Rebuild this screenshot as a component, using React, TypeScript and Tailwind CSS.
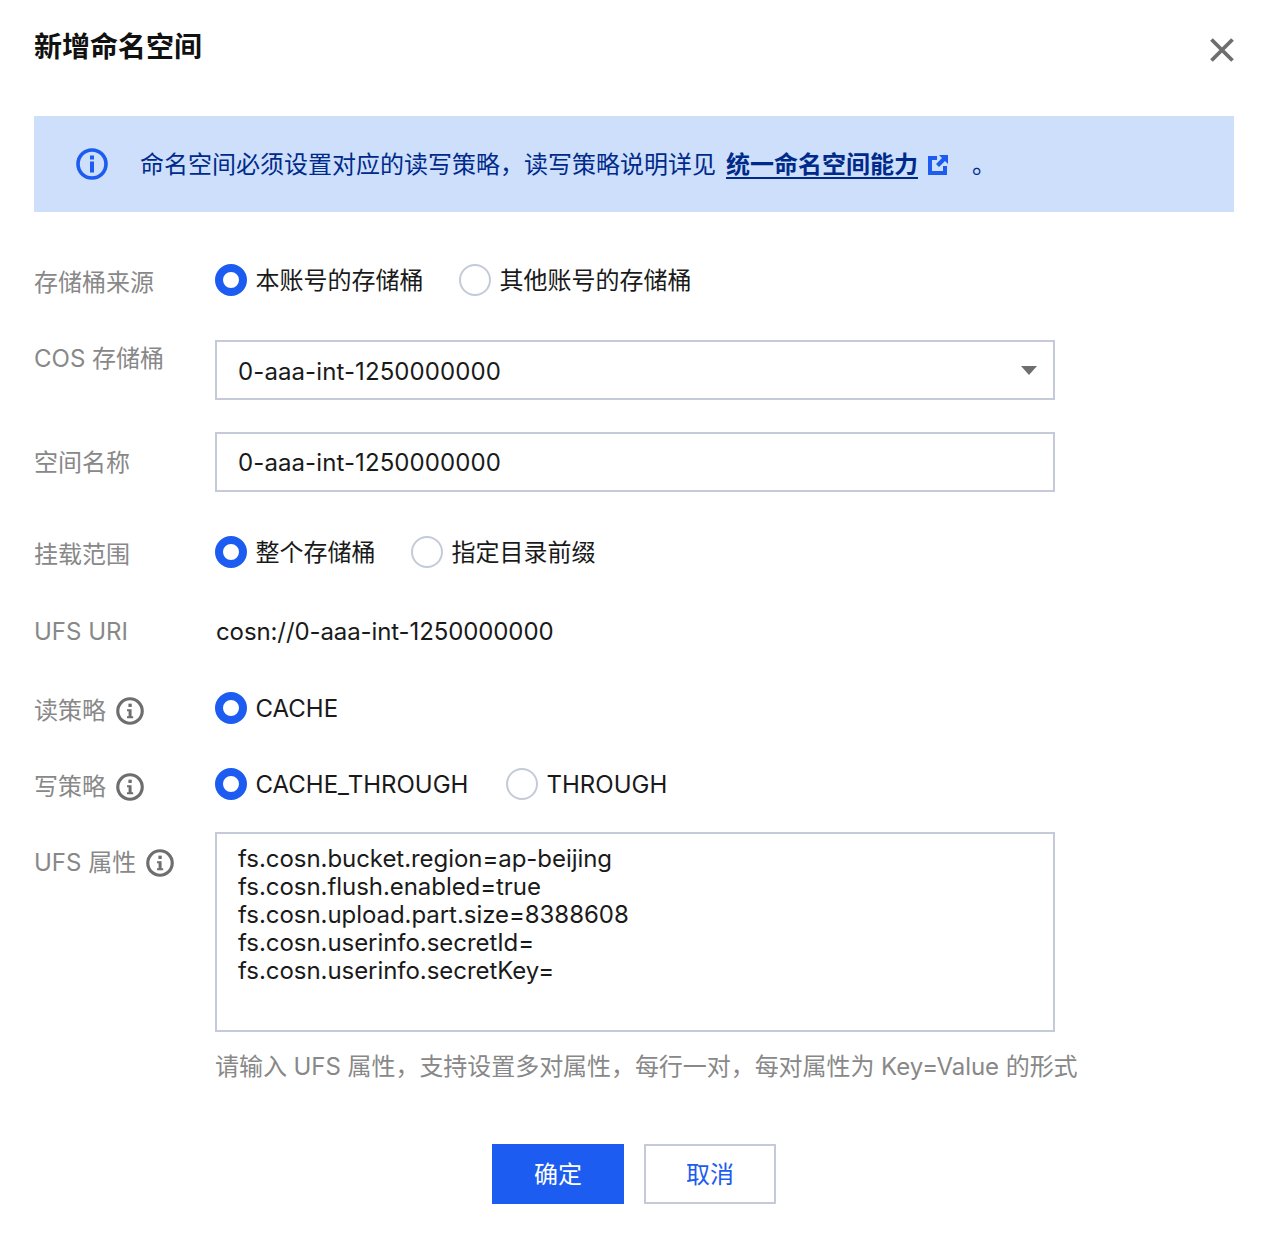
const fontStack = "font-['Inter','Noto_Sans_CJK_SC',sans-serif]";

function InfoIcon({ className, plain }: { className: string; plain?: boolean }) {
  return (
    <svg viewBox="0 0 32 32" className={className} fill="none">
      <circle cx="16" cy="16" r="14" stroke="currentColor" strokeWidth="3.6" />
      {plain ? (
        <path d="M14 7.5h4v4h-4zM14 13.5h4v11h-4z" fill="currentColor" />
      ) : (
        <>
          <rect x="14.2" y="7.6" width="3.8" height="3.8" fill="currentColor" />
          <path d="M12.6 14h5.2v8h1.8v2.4h-7v-2.4h1.8v-5.6h-1.8z" fill="currentColor" />
        </>
      )}
    </svg>
  );
}

function Radio({ label, checked, className }: { label: string; checked?: boolean; className?: string }) {
  return (
    <label className={`flex h-8 items-center ${className ?? ''}`}>
      {checked ? (
        <span className="box-border size-8 rounded-full border-[8px] border-[#1c5cf0] bg-white" />
      ) : (
        <span className="box-border size-8 rounded-full border-2 border-[#c5cad8] bg-white" />
      )}
      <span className="ml-[8.5px] pt-0.5 text-2xl leading-8 text-[#1a1a1a]">{label}</span>
    </label>
  );
}

function Label({ text, info, className }: { text: string; info?: boolean; className?: string }) {
  return (
    <div className={`w-[181px] shrink-0 self-start text-2xl leading-8 text-[#888888] ${className ?? 'pt-[3px]'}`}>
      <div className="flex items-center">
        {text}
        {info && <InfoIcon className="ml-[9.5px] size-7 text-[#6e6e6e]" />}
      </div>
    </div>
  );
}

export default function App() {
  return (
    <div className={`h-[1240px] w-[1268px] overflow-hidden bg-white px-[34px] ${fontStack}`}>
      <div className="flex h-[116px] items-start justify-between">
        <h1 className="pt-[29px] text-[28px] leading-9 font-bold text-[#111111]">新增命名空间</h1>
        <svg viewBox="0 0 24 24" className="mt-[38px] size-6 text-[#6e6e6e]" fill="none">
          <path d="M1.5 1.5l21 21M22.5 1.5l-21 21" stroke="currentColor" strokeWidth="3.8" />
        </svg>
      </div>

      <div className="flex h-24 items-center bg-[#cddffa] pl-[42px] text-2xl leading-8 text-[#002a8a]">
        <InfoIcon plain className="size-8 text-[#1c5cf0]" />
        <span className="ml-8 pt-0.5">命名空间必须设置对应的读写策略，读写策略说明详见</span>
        <a className="ml-[10px] pt-0.5 font-semibold underline underline-offset-4">统一命名空间能力</a>
        <svg viewBox="0 0 20 20" className="mt-0.5 ml-[10px] size-5 text-[#1c5cf0]">
          <path fill="currentColor" d="M0 1h9v4H4v11h11v-5h4v9H0zM11 0h9v9l-3-3-6 6-3-3 6-6z" />
        </svg>
        <span className="ml-6 pt-0.5">。</span>
      </div>

      <div className="mt-[52px] flex h-8">
        <Label text="存储桶来源" />
        <Radio label="本账号的存储桶" checked />
        <Radio label="其他账号的存储桶" className="ml-[35.4px]" />
      </div>

      <div className="mt-11 flex">
        <Label text="COS 存储桶" />
        <div className="flex h-[60px] w-[840px] items-center justify-between border-2 border-[#c5cad8] pr-4 pl-[21px] text-2xl text-[#1a1a1a]">
          <span className="pt-1 tracking-[0.1px]">0-aaa-int-1250000000</span>
          <span className="size-0 border-x-8 border-t-[9px] border-x-transparent border-t-[#6e6e6e]" />
        </div>
      </div>

      <div className="mt-8 flex">
        <Label text="空间名称" className="pt-[15px]" />
        <input
          readOnly
          value="0-aaa-int-1250000000"
          className="h-[60px] w-[840px] border-2 border-[#c5cad8] px-[21px] text-2xl tracking-[0.1px] text-[#1a1a1a] outline-none"
        />
      </div>

      <div className="mt-11 flex h-8">
        <Label text="挂载范围" />
        <Radio label="整个存储桶" checked />
        <Radio label="指定目录前缀" className="ml-[35.4px]" />
      </div>

      <div className="mt-[47px] flex h-8">
        <Label text="UFS URI" className="pt-px" />
        <div className="ml-px pt-px text-2xl leading-8 tracking-[-0.1px] text-[#1a1a1a]">cosn://0-aaa-int-1250000000</div>
      </div>

      <div className="mt-[45px] flex h-8">
        <Label text="读策略" info />
        <Radio label="CACHE" checked />
      </div>

      <div className="mt-11 flex h-8">
        <Label text="写策略" info />
        <Radio label="CACHE_THROUGH" checked />
        <Radio label="THROUGH" className="ml-[37.6px]" />
      </div>

      <div className="mt-8 flex">
        <Label text="UFS 属性" info className="pt-[15px]" />
        <div>
          <textarea
            readOnly
            value={'fs.cosn.bucket.region=ap-beijing\nfs.cosn.flush.enabled=true\nfs.cosn.upload.part.size=8388608\nfs.cosn.userinfo.secretId=\nfs.cosn.userinfo.secretKey='}
            className="block h-[200px] w-[840px] resize-none border-2 border-[#c5cad8] px-[21px] pt-[11px] text-2xl leading-7 tracking-[-0.05px] text-[#1a1a1a] outline-none"
          />
          <p className="mt-[19px] text-2xl leading-8 tracking-[-0.05px] whitespace-nowrap text-[#888888]">
            请输入 UFS 属性，支持设置多对属性，每行一对，每对属性为 Key=Value 的形式
          </p>
        </div>
      </div>

      <div className="mt-[61px] flex justify-center gap-5">
        <button className="h-[60px] w-[132px] bg-[#1c5cf0] pt-0.5 text-2xl text-white">确定</button>
        <button className="h-[60px] w-[132px] border-2 border-[#c5cad8] bg-white pt-0.5 text-2xl text-[#1c5cf0]">取消</button>
      </div>
    </div>
  );
}
